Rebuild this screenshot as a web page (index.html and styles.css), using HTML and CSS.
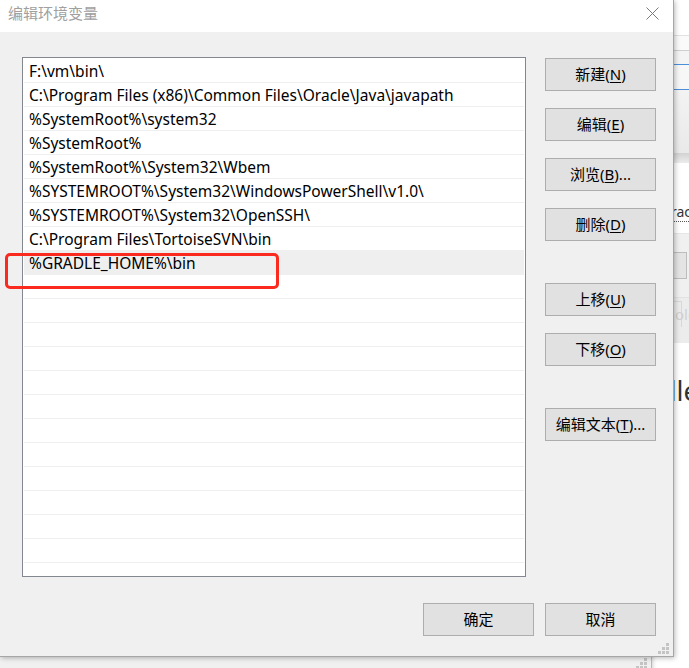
FILE: index.html
```html
<!DOCTYPE html>
<html lang="zh-CN">
<head>
<meta charset="utf-8">
<title>编辑环境变量</title>
<link rel="stylesheet" href="styles.css">
</head>
<body>
<div class="desk">
  <div class="win-a">
    <div class="band b1"></div>
    <div class="band b2"></div>
    <div class="band b3"></div>
    <div class="band b4"></div>
    <div class="band b5"></div>
    <div class="band b6"></div>
    <div class="band b7"><span class="rac">rac</span></div>
    <div class="band b8"><span class="ghost-btn"></span></div>
    <div class="band b9"><span class="ghost-tab">old</span></div>
    <div class="band b10"><span class="big">dle</span></div>
  </div>
  <div class="win-b">
    <svg class="grip grip-b" width="12" height="12" viewBox="0 0 12 12"><rect x="8" y="0" width="3" height="3"/><rect x="4" y="4" width="3" height="3"/><rect x="8" y="4" width="3" height="3"/><rect x="0" y="8" width="3" height="3"/><rect x="4" y="8" width="3" height="3"/><rect x="8" y="8" width="3" height="3"/></svg>
  </div>

  <div class="dialog">
    <div class="titlebar">
      <span class="title">编辑环境变量</span>
      <svg class="close" width="13" height="13" viewBox="0 0 13 13"><path d="M0.5 0.5 L12.5 12.5 M12.5 0.5 L0.5 12.5"/></svg>
    </div>
    <div class="dlg-body">
      <div class="main">
        <div class="list">
          <div class="row">F:\vm\bin\</div>
          <div class="row">C:\Program Files (x86)\Common Files\Oracle\Java\javapath</div>
          <div class="row">%SystemRoot%\system32</div>
          <div class="row">%SystemRoot%</div>
          <div class="row">%SystemRoot%\System32\Wbem</div>
          <div class="row">%SYSTEMROOT%\System32\WindowsPowerShell\v1.0\</div>
          <div class="row">%SYSTEMROOT%\System32\OpenSSH\</div>
          <div class="row">C:\Program Files\TortoiseSVN\bin</div>
          <div class="row selected">%GRADLE_HOME%\bin</div>
          <div class="row"></div>
          <div class="row"></div>
          <div class="row"></div>
          <div class="row"></div>
          <div class="row"></div>
          <div class="row"></div>
          <div class="row"></div>
          <div class="row"></div>
          <div class="row"></div>
          <div class="row"></div>
          <div class="row"></div>
          <div class="row"></div>
          <div class="row"></div>
        </div>
        <div class="side">
          <button class="btn">新建(<u>N</u>)</button>
          <button class="btn">编辑(<u>E</u>)</button>
          <button class="btn">浏览(<u>B</u>)...</button>
          <button class="btn">删除(<u>D</u>)</button>
          <button class="btn group">上移(<u>U</u>)</button>
          <button class="btn">下移(<u>O</u>)</button>
          <button class="btn group">编辑文本(<u>T</u>)...</button>
        </div>
      </div>
      <div class="footer">
        <button class="btn">确定</button>
        <button class="btn">取消</button>
      </div>
    </div>
    <svg class="grip grip-d" width="12" height="12" viewBox="0 0 12 12"><rect x="8" y="0" width="3" height="3"/><rect x="4" y="4" width="3" height="3"/><rect x="8" y="4" width="3" height="3"/><rect x="0" y="8" width="3" height="3"/><rect x="4" y="8" width="3" height="3"/><rect x="8" y="8" width="3" height="3"/></svg>
  </div>

  <div class="mark"></div>
</div>
</body>
</html>
```
FILE: styles.css
```css
* { box-sizing: border-box; }
html, body { margin: 0; padding: 0; }
body {
  width: 689px;
  height: 668px;
  overflow: hidden;
  background: #ffffff;
  font-family: "Noto Sans", "Noto Sans CJK SC", sans-serif;
  font-size: 15px;
  color: #000;
}
.desk { position: relative; width: 689px; height: 668px; overflow: hidden; }

/* window behind, on the right */
.win-a {
  position: absolute;
  left: 560px;
  top: 0;
  width: 200px;
  height: 668px;
  background: #fff;
  display: flex;
  flex-direction: column;
}
.band { flex: none; position: relative; }
.b1 { height: 36px; background: #fff; border-bottom: 1px solid #e2e2e2; }
.b2 { height: 15px; background: #fafafa; border-bottom: 1px solid #cfcfcf; }
.b3 { height: 14px; background: #f4f4f4; border-bottom: 1px solid #4a8fd8; }
.b4 { height: 25px; background: #f7f7f7; border-bottom: 1px solid #4a8fd8; }
.b5 { height: 63px; background: linear-gradient(#f3f3f3, #e9e9e9); }
.b6 { height: 10px; background: linear-gradient(#d2d2d2, #ececec); }
.b7 { height: 70px; background: #fff; }
.b8 { height: 64px; background: #f0f0f0; border-top: 1px solid #e6e6e6; }
.b9 { height: 46px; background: #ececec; border-top: 1px solid #e2e2e2; }
.b10 { flex: 1; background: #fff; }
.rac {
  position: absolute; left: 111px; top: 40px;
  font-size: 14px; color: #333;
  border-bottom: 1px dotted #555;
  line-height: 18px;
}
.ghost-btn {
  position: absolute; left: 90px; top: 18px;
  width: 37px; height: 27px;
  border: 1px solid #bdbdbd; background: #e4e4e4;
}
.ghost-tab {
  position: absolute; left: 100px; top: 3px;
  width: 22px; height: 26px;
  border: 1px solid #d8d8d8; border-bottom: none;
  color: #d0d0d0; font-size: 15px; line-height: 24px; padding-left: 14px;
}
.big {
  position: absolute; left: 100px; top: 32px;
  font-size: 27px; color: #333; line-height: 32px;
}

/* window behind, at the bottom */
.win-b {
  position: absolute;
  left: -10px;
  top: 560px;
  width: 662px;
  height: 112px;
  background: #f0f0f0;
  border-right: 1px solid #b8b8b8;
  box-shadow: 1px 1px 4px rgba(0,0,0,0.18);
}
.grip { position: absolute; fill: #c4c4c4; }
.grip-b { right: 3px; bottom: 2px; }

/* dialog */
.dialog {
  position: absolute;
  left: 0;
  top: 0;
  width: 674px;
  height: 657px;
  background: #f0f0f0;
  border-right: 1px solid #a6a6a6;
  border-bottom: 1px solid #a6a6a6;
  box-shadow: 1px 1px 5px rgba(0,0,0,0.28);
  display: flex;
  flex-direction: column;
}
.grip-d { right: 3px; bottom: 1px; }
.titlebar {
  height: 32px;
  flex: none;
  background: #fff;
  display: flex;
  align-items: center;
  padding-left: 8px;
}
.title {
  font-family: "Noto Sans CJK SC", sans-serif;
  font-size: 15px;
  color: #a0a0a0;
  margin-top: -7px;
}
.close {
  margin-left: auto;
  margin-right: 14px;
  margin-top: -6px;
  stroke: #7a7a7a;
  stroke-width: 1;
  fill: none;
}
.dlg-body {
  flex: 1;
  display: flex;
  flex-direction: column;
  padding: 25px 17px 0 22px;
}
.main { display: flex; gap: 19px; }
.list {
  width: 504px;
  height: 520px;
  border: 1px solid #828790;
  background: #fff;
  padding: 1px;
  overflow: hidden;
}
.row {
  height: 24px;
  border-bottom: 1px solid #efefef;
  padding: 2px 0 0 5px;
  font-size: 15.5px;
  line-height: 21px;
  white-space: nowrap;
}
.row.selected { background: #efefef; }

.side {
  width: 111px;
  display: flex;
  flex-direction: column;
}
.btn {
  width: 111px;
  height: 33px;
  flex: none;
  border: 1px solid #adadad;
  background: #e1e1e1;
  font-family: "Noto Sans", "Noto Sans CJK SC", sans-serif;
  font-size: 15px;
  color: #000;
  padding: 0;
  margin: 17px 0 0 0;
  line-height: 31px;
}
.side .btn:first-child { margin-top: 1px; }
.side .btn.group { margin-top: 42px; }
.btn u { text-decoration-thickness: 1px; text-underline-offset: 2px; }
.footer {
  display: flex;
  justify-content: flex-end;
  gap: 11px;
  margin-top: 26px;
}
.footer .btn { margin: 0; }

/* annotation */
.mark {
  position: absolute;
  left: 5px;
  top: 253px;
  width: 274px;
  height: 36px;
  border: 3px solid #fa2a1e;
  border-radius: 5px;
}
```
